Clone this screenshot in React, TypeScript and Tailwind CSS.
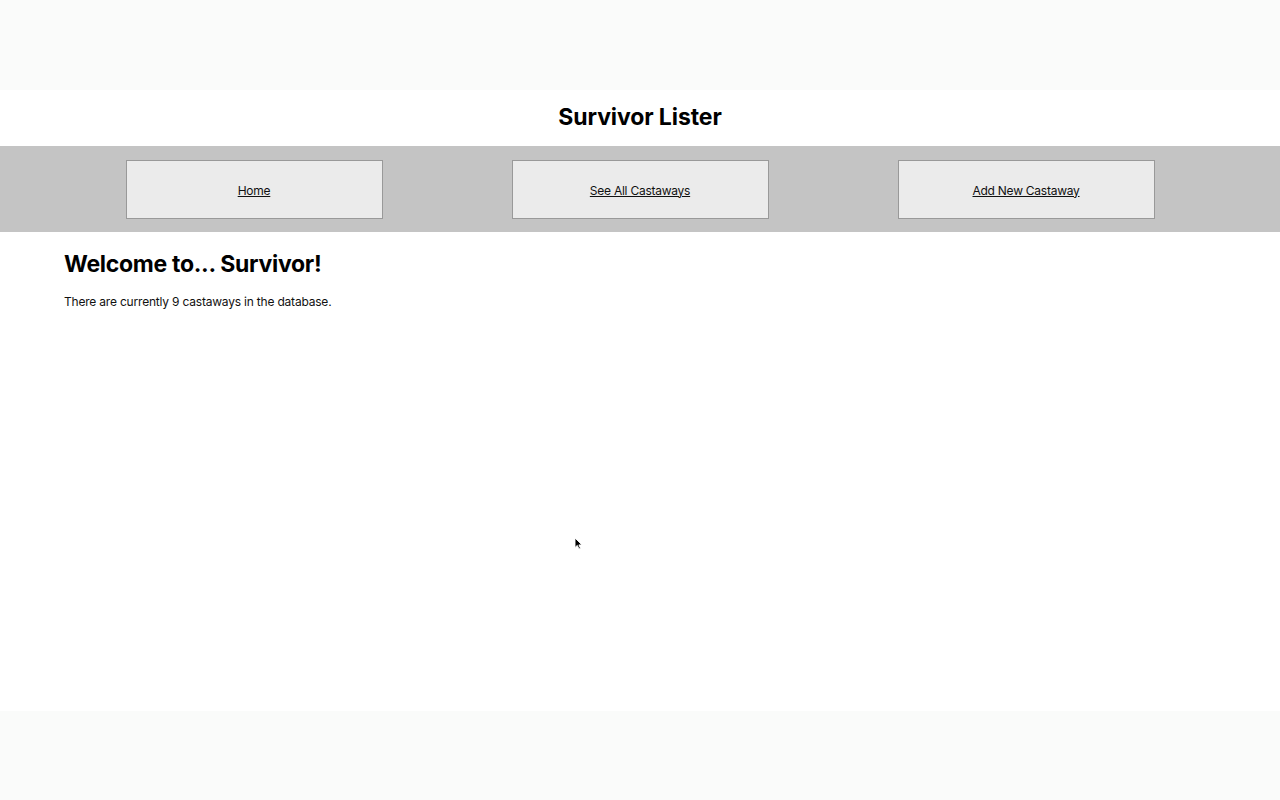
export default function App() {
  const links = ['Home', 'See All Castaways', 'Add New Castaway']

  return (
    <div className="relative min-h-screen bg-[#fafbfa] font-['Inter',sans-serif] text-black">
      <div className="h-[90px]" />
      <div className="h-[621px] bg-white">
        <header className="flex h-[56px] items-center justify-center pb-[2px]">
          <h1 className="text-[23px] font-bold tracking-[-0.1px]">Survivor Lister</h1>
        </header>

        <nav className="flex h-[86px] items-start justify-center gap-[129px] bg-[#c4c4c4] pt-[14px]">
          {links.map((label) => (
            <div
              key={label}
              className="flex h-[59px] w-[257px] items-center justify-center border border-[#999999] bg-[#ebebeb]"
            >
              <a href="#" className="pt-[2px] text-[12px] tracking-[-0.25px] text-[#111] underline">
                {label}
              </a>
            </div>
          ))}
        </nav>

        <main className="px-16 pt-[18px]">
          <h2 className="text-[23px] leading-[28px] font-bold tracking-[-0.3px]">Welcome to... Survivor!</h2>
          <p className="mt-[15px] text-[12px] tracking-[-0.2px] text-[#111]">
            There are currently 9 castaways in the database.
          </p>
        </main>
      </div>

      {/* mouse pointer */}
      <svg className="absolute left-[574px] top-[537px]" width="9" height="13" viewBox="0 0 9 13">
        <path d="M1 1 L1 10.5 L3.3 8.4 L5 12 L6.5 11.3 L4.9 7.9 L8 7.9 Z" fill="#000" stroke="#fff" strokeWidth="0.9" />
      </svg>
    </div>
  )
}
